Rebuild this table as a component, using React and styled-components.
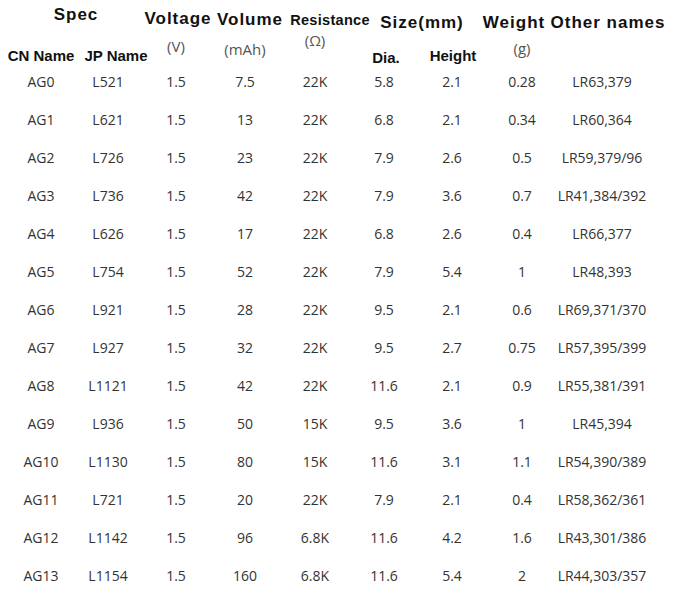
import React from 'react'
import styled, { createGlobalStyle } from 'styled-components'

const GlobalStyle = createGlobalStyle`
  html, body {
    margin: 0;
    padding: 0;
    background: #fff;
  }
`

const COLS = '82px 52px 84px 54px 86px 52px 84px 56px 104px'

const rows = [
  ['AG0', 'L521', '1.5', '7.5', '22K', '5.8', '2.1', '0.28', 'LR63,379'],
  ['AG1', 'L621', '1.5', '13', '22K', '6.8', '2.1', '0.34', 'LR60,364'],
  ['AG2', 'L726', '1.5', '23', '22K', '7.9', '2.6', '0.5', 'LR59,379/96'],
  ['AG3', 'L736', '1.5', '42', '22K', '7.9', '3.6', '0.7', 'LR41,384/392'],
  ['AG4', 'L626', '1.5', '17', '22K', '6.8', '2.6', '0.4', 'LR66,377'],
  ['AG5', 'L754', '1.5', '52', '22K', '7.9', '5.4', '1', 'LR48,393'],
  ['AG6', 'L921', '1.5', '28', '22K', '9.5', '2.1', '0.6', 'LR69,371/370'],
  ['AG7', 'L927', '1.5', '32', '22K', '9.5', '2.7', '0.75', 'LR57,395/399'],
  ['AG8', 'L1121', '1.5', '42', '22K', '11.6', '2.1', '0.9', 'LR55,381/391'],
  ['AG9', 'L936', '1.5', '50', '15K', '9.5', '3.6', '1', 'LR45,394'],
  ['AG10', 'L1130', '1.5', '80', '15K', '11.6', '3.1', '1.1', 'LR54,390/389'],
  ['AG11', 'L721', '1.5', '20', '22K', '7.9', '2.1', '0.4', 'LR58,362/361'],
  ['AG12', 'L1142', '1.5', '96', '6.8K', '11.6', '4.2', '1.6', 'LR43,301/386'],
  ['AG13', 'L1154', '1.5', '160', '6.8K', '11.6', '5.4', '2', 'LR44,303/357'],
]

// top header: text, column start, span, shift (px), padding-top
const topHeads = [
  { t: 'Spec', col: 1, span: 2, shift: 9, top: 5 },
  { t: 'Voltage', col: 3, span: 1, shift: 2, top: 9 },
  { t: 'Volume', col: 4, span: 1, shift: 5, top: 10 },
  { t: 'Resistance', col: 5, span: 1, shift: 15, top: 10, small: true },
  { t: 'Size(mm)', col: 6, span: 2, shift: -4, top: 13 },
  { t: 'Weight', col: 8, span: 1, shift: -8, top: 13 },
  { t: 'Other names', col: 9, span: 1, shift: 6, top: 13 },
]

const subHeads = [
  { t: 'CN Name', col: 1, shift: 0, top: 16, bold: true },
  { t: 'JP Name', col: 2, shift: 8, top: 16, bold: true },
  { t: '(V)', col: 3, shift: 0, top: 6 },
  { t: '(mAh)', col: 4, shift: 0, top: 9 },
  { t: '(Ω)', col: 5, shift: 0, top: 0 },
  { t: 'Dia.', col: 6, shift: 2, top: 18, bold: true },
  { t: 'Height', col: 7, shift: 1, top: 16, bold: true },
  { t: '(g)', col: 8, shift: 0, top: 8 },
]

export default function App() {
  return (
    <Page>
      <GlobalStyle />
      <Table>
        {topHeads.map((h) => (
          <TopHead
            key={h.t}
            $col={h.col}
            $span={h.span}
            $shift={h.shift}
            $top={h.top}
            $small={h.small}
          >
            {h.t}
          </TopHead>
        ))}
        {subHeads.map((h) => (
          <SubHead
            key={h.t}
            $col={h.col}
            $shift={h.shift}
            $top={h.top}
            $bold={h.bold}
          >
            {h.t}
          </SubHead>
        ))}
        {rows.map((r, ri) =>
          r.map((v, i) => (
            <Cell key={r[0] + i} $row={ri + 3} $col={i + 1}>
              {v}
            </Cell>
          ))
        )}
      </Table>
    </Page>
  )
}

const Page = styled.div`
  width: 695px;
  height: 603px;
  background: #fff;
  overflow: hidden;
`

const Table = styled.div`
  display: grid;
  grid-template-columns: ${COLS};
  grid-template-rows: 30px 32px repeat(14, 38px);
`

const Centered = styled.div`
  display: flex;
  justify-content: center;
  white-space: nowrap;
  min-width: 0;
`

const TopHead = styled(Centered)`
  grid-row: 1;
  grid-column: ${(p) => p.$col} / span ${(p) => p.$span};
  align-items: flex-start;
  padding-top: ${(p) => p.$top}px;
  padding-left: ${(p) => (p.$shift > 0 ? p.$shift * 2 : 0)}px;
  padding-right: ${(p) => (p.$shift < 0 ? -p.$shift * 2 : 0)}px;
  font-family: 'Liberation Sans', Arial, sans-serif;
  font-weight: bold;
  font-size: ${(p) => (p.$small ? '14.5px' : '17px')};
  letter-spacing: ${(p) => (p.$small ? '0.3px' : '1px')};
  line-height: 20px;
  color: #111;
`

const SubHead = styled(Centered)`
  grid-row: 2;
  grid-column: ${(p) => p.$col};
  align-items: flex-start;
  padding-top: ${(p) => p.$top}px;
  padding-left: ${(p) => (p.$shift > 0 ? p.$shift * 2 : 0)}px;
  padding-right: ${(p) => (p.$shift < 0 ? -p.$shift * 2 : 0)}px;
  font-family: ${(p) =>
    p.$bold ? "'Liberation Sans', Arial, sans-serif" : "'Open Sans', sans-serif"};
  font-weight: ${(p) => (p.$bold ? 'bold' : 400)};
  font-size: 15px;
  line-height: 20px;
  color: ${(p) => (p.$bold ? '#111' : '#555')};
`

const Cell = styled(Centered)`
  grid-row: ${(p) => p.$row};
  grid-column: ${(p) => p.$col};
  align-items: center;
  font-family: 'Open Sans', sans-serif;
  font-size: 14px;
  color: #333;
`
